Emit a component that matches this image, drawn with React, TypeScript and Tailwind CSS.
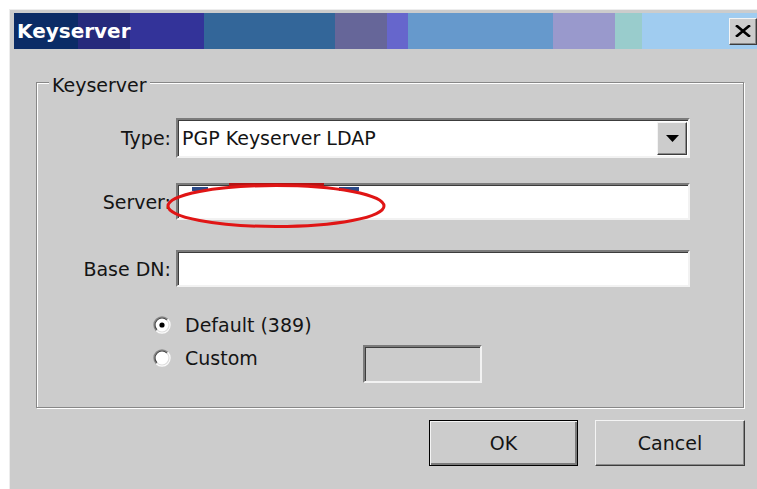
import React from "react";

// hard-stop stripes of the caption bar, left to right
const captionStripes =
  "bg-[linear-gradient(to_right,#0b2c66_0px,#0b2c66_64px,#262a7c_64px,#262a7c_116px,#333399_116px,#333399_190px,#336699_190px,#336699_321px,#666699_321px,#666699_373px,#6666cc_373px,#6666cc_394px,#6699cc_394px,#6699cc_539px,#9999cc_539px,#9999cc_601px,#99cccc_601px,#99cccc_628px,#a0ccf0_628px)]";

const sunken =
  "border-2 border-t-[#7b7b7b] border-l-[#7b7b7b] border-r-[#f2f2f2] border-b-[#f2f2f2] shadow-[inset_1px_1px_0_#3c3c3c]";

const raised =
  "border border-t-[#f4f4f4] border-l-[#f4f4f4] border-r-[#3c3c3c] border-b-[#3c3c3c] shadow-[inset_-1px_-1px_0_#8a8a8a]";

function Radio({ checked }: { checked?: boolean }) {
  return (
    <svg width="18" height="18" viewBox="0 0 18 18" className="shrink-0">
      <circle cx="9" cy="9" r="8" fill="#ffffff" />
      <path d="M3.34 14.66 A8 8 0 0 1 14.66 3.34" fill="none" stroke="#8a8a8a" strokeWidth="1.4" />
      <path d="M14.66 3.34 A8 8 0 0 1 3.34 14.66" fill="none" stroke="#fbfbfb" strokeWidth="1.4" />
      <path d="M4.05 13.95 A7 7 0 0 1 13.95 4.05" fill="none" stroke="#474747" strokeWidth="1.2" />
      <path d="M13.95 4.05 A7 7 0 0 1 4.05 13.95" fill="none" stroke="#dedede" strokeWidth="1.2" />
      {checked && <circle cx="9" cy="9" r="2.6" fill="#000000" />}
    </svg>
  );
}

function Row({ label, className, children }: { label: string; className?: string; children: React.ReactNode }) {
  return (
    <div className={"flex items-center gap-[5px] " + (className ?? "")}>
      <span className="w-[134px] text-right">{label}</span>
      {children}
    </div>
  );
}

export default function App() {
  return (
    <div className="h-[489px] w-[757px] overflow-hidden bg-white pl-[9px] pt-[9px] font-['DejaVu_Sans',sans-serif] text-[19px] leading-[22px] text-[#141414]">
      <div className="h-full border-l border-t border-[#ededed] bg-[#cccccc] pl-[4px] pt-[3px]">
        {/* caption */}
        <div className={"flex h-[36px] items-center " + captionStripes}>
          <span className="pl-[3px] text-[20px] font-bold text-white">Keyserver</span>
          <div className="flex-1" />
          <div className={"flex h-[27px] w-[28px] shrink-0 items-center justify-center bg-[#cccccc] " + raised}>
            <svg width="16" height="12" viewBox="0 0 16 12">
              <path d="M2 1 L14 11 M14 1 L2 11" stroke="#000" strokeWidth="2.6" strokeLinecap="square" />
            </svg>
          </div>
        </div>

        {/* group box */}
        <div className="relative ml-[22px] mt-[33px] h-[326px] w-[708px] border border-[#878787] shadow-[inset_1px_1px_0_#fff,1px_1px_0_#fff]">
          <span className="absolute left-[12px] top-[-9px] bg-[#cccccc] px-[3px]">Keyserver</span>

          <div className="flex flex-col pt-[35px]">
            <Row label="Type:">
              <div className={"flex h-[40px] w-[514px] items-center bg-white pr-[1px] " + sunken}>
                <span className="flex-1 pl-[4px]">PGP Keyserver LDAP</span>
                <div className={"flex h-[33px] w-[30px] items-center justify-center bg-[#cccccc] " + raised}>
                  <svg width="13" height="7" viewBox="0 0 13 7">
                    <path d="M0 0 H13 L6.5 7 Z" fill="#000" />
                  </svg>
                </div>
              </div>
            </Row>

            <Row label="Server:" className="mt-[25px]">
              <div className="relative">
                <div className={"h-[37px] w-[514px] bg-white " + sunken} />
                <svg width="224" height="50" viewBox="0 0 224 50" className="absolute left-[-10px] top-[-3px]">
                  <rect x="26" y="7" width="16" height="4" fill="#2c4a88" />
                  <rect x="173" y="7" width="20" height="4" fill="#2c4a88" />
                  <rect x="63" y="3" width="95" height="4" fill="#b41414" />
                  <ellipse cx="110" cy="26" rx="108" ry="20.5" fill="none" stroke="#e01515" strokeWidth="3" />
                </svg>
              </div>
            </Row>

            <Row label="Base DN:" className="mt-[30px]">
              <div className={"h-[37px] w-[514px] bg-white " + sunken} />
            </Row>

            <div className="mt-[21px] flex flex-col pl-[116px]">
              <div className="flex h-[33px] items-center">
                <Radio checked />
                <span className="ml-[14px]">Default (389)</span>
              </div>
              <div className="flex items-start">
                <div className="flex h-[33px] w-[210px] items-center">
                  <Radio />
                  <span className="ml-[14px]">Custom</span>
                </div>
                <div className={"mt-[4px] h-[38px] w-[119px] bg-[#cccccc] " + sunken} />
              </div>
            </div>
          </div>
        </div>

        {/* buttons */}
        <div className="mt-[12px] flex justify-end gap-[17px] pr-[12px]">
          <div className="flex h-[46px] w-[149px] items-center justify-center border border-black shadow-[inset_1px_1px_0_#f4f4f4,inset_-2px_-2px_0_#7a7a7a]">
            OK
          </div>
          <div className={"flex h-[46px] w-[150px] items-center justify-center " + raised}>Cancel</div>
        </div>
      </div>
    </div>
  );
}
